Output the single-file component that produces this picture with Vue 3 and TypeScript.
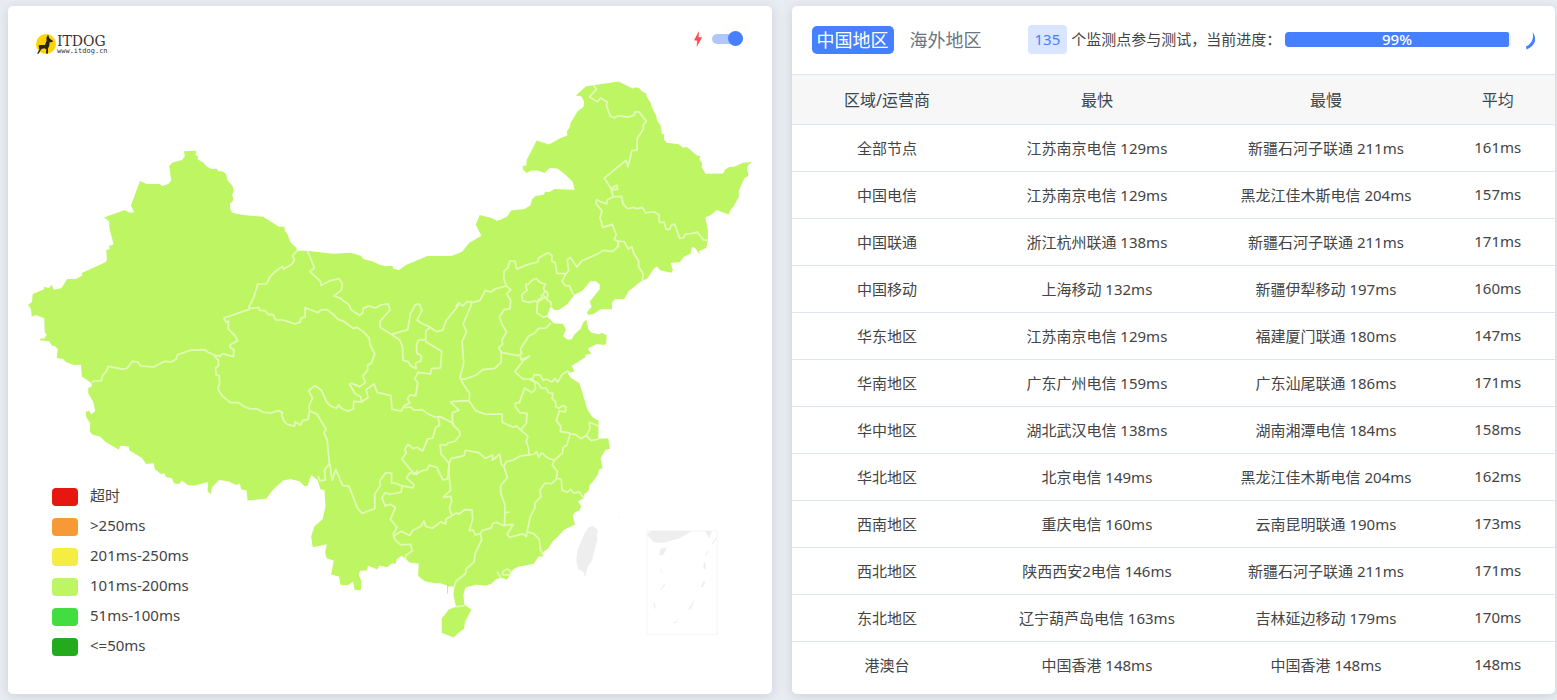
<script setup lang="ts">
import { ref } from 'vue'

interface Sheet {
  x: number
  y: number
  lines: string[]
}
interface Row {
  area: string
  fast: string
  slow: string
  avg: string
}

const realtime = ref(true)
const region = ref('china')
const progress = 99

const legend = [
  { label: '超时', tone: 'timeout' },
  { label: '>250ms', tone: 'slowest' },
  { label: '201ms-250ms', tone: 'slow' },
  { label: '101ms-200ms', tone: 'fair' },
  { label: '51ms-100ms', tone: 'good' },
  { label: '<=50ms', tone: 'best' },
]

const rows: Row[] = [
  { area: '全部节点', fast: '江苏南京电信 129ms', slow: '新疆石河子联通 211ms', avg: '161ms' },
  { area: '中国电信', fast: '江苏南京电信 129ms', slow: '黑龙江佳木斯电信 204ms', avg: '157ms' },
  { area: '中国联通', fast: '浙江杭州联通 138ms', slow: '新疆石河子联通 211ms', avg: '171ms' },
  { area: '中国移动', fast: '上海移动 132ms', slow: '新疆伊犁移动 197ms', avg: '160ms' },
  { area: '华东地区', fast: '江苏南京电信 129ms', slow: '福建厦门联通 180ms', avg: '147ms' },
  { area: '华南地区', fast: '广东广州电信 159ms', slow: '广东汕尾联通 186ms', avg: '171ms' },
  { area: '华中地区', fast: '湖北武汉电信 138ms', slow: '湖南湘潭电信 184ms', avg: '158ms' },
  { area: '华北地区', fast: '北京电信 149ms', slow: '黑龙江佳木斯电信 204ms', avg: '162ms' },
  { area: '西南地区', fast: '重庆电信 160ms', slow: '云南昆明联通 190ms', avg: '173ms' },
  { area: '西北地区', fast: '陕西西安2电信 146ms', slow: '新疆石河子联通 211ms', avg: '171ms' },
  { area: '东北地区', fast: '辽宁葫芦岛电信 163ms', slow: '吉林延边移动 179ms', avg: '170ms' },
  { area: '港澳台', fast: '中国香港 148ms', slow: '中国香港 148ms', avg: '148ms' },
]

// Map sheets hold points in thirds of a map unit, relative to the sheet's origin.
const coast: Sheet[] = [
  { x: 20, y: 140, lines: ['24,494 36,487 38,462 72,448 71,440 86,444 95,434 101,449 124,445 142,417 168,417 186,407 187,398 258,366 261,358 259,330 268,328 268,318 281,313 269,268 267,243 252,232 314,210 327,217 343,217 333,196 360,123 380,132 418,132 428,138 446,131 454,121 448,78 458,67 486,60 495,48 492,33 527,32 530,38 525,43 535,49 533,57 551,68 559,78 574,87 590,86 595,93 608,94 619,102 623,121 637,136 642,151 637,165 641,180 630,192 631,206 637,218 665,224 730,230 776,259 794,261 795,273 802,281 813,308 829,323 832,332'] },
  { x: 200, y: 230, lines: ['320,62 400,71 453,68 483,77 492,88 516,93 540,104 557,109 578,107 580,116 598,120 620,104 683,78'] },
  { x: 400, y: 230, lines: ['155,78 187,65 209,38 245,17 236,0 228,-16 240,-45 275,-36 292,-28'] },
  { x: 500, y: 70, lines: ['0,450 22,440 34,421 74,417 92,406 97,388 107,378 132,374 137,365 149,366 165,357 225,359 219,335 198,315 175,296 151,293 134,309 115,301 93,302 81,309 70,298 69,288 80,286 81,270 111,211 148,223 181,204 203,196 202,183 210,172 213,158 234,123 252,110 253,93 246,79 229,76 259,48 281,45 357,34 399,55 408,51 420,55 427,63 440,70 441,79 454,99 456,110 471,140 472,150 483,166 486,190 494,193 493,207 502,218 538,222 549,232 563,231 591,255 603,258 599,266 608,281 606,291 618,311 671,310 676,299 689,291 704,290 731,278 758,276 746,285 742,297 747,311 744,320 735,324 718,362 718,380 702,409 694,418 687,433 651,420 635,434 617,442 625,480 625,512 620,534 598,543 602,556 586,533 577,532 573,551 553,560 541,577 513,578 520,600 515,608 482,601 471,589 460,600 442,627 428,631'] },
  { x: 400, y: 230, lines: ['728,151 687,184 674,207 646,208 637,219 637,238 602,238 582,252 566,255 562,247 576,230 570,215 600,178 600,163 587,153 572,154 548,182 524,194 504,222 477,240 463,240 454,228 442,259 453,269 461,280 490,281 499,299 490,318 504,329 516,328 525,313 543,296 551,277 560,269 566,298 577,309 600,313 606,308 621,316 620,340 614,345 592,342 572,352 565,356 575,371 558,374 557,382 516,408 525,424 504,430 514,444 539,459 564,540 579,562 597,573 596,623'] },
  { x: 420, y: 370, lines: ['536,206 566,205 571,236 557,240 543,265 549,295 538,299 535,314 519,336 510,345 506,365 494,372 493,385 475,394 484,408 481,421 468,426 459,436 466,464 449,472 435,478 415,500 400,513 386,535 370,547 371,560 357,560 342,582 318,587 297,590 281,598 262,629 243,624 229,628 216,641 200,647 168,645 137,653 131,674 134,705 155,719 136,756 133,777 116,790 101,803 66,789 66,746 87,719 109,711 101,677 104,650 85,650 85,671 82,672 82,647 62,640 45,640 15,634 0,622'] },
  { x: 300, y: 400, lines: ['355,528 357,492 330,488 306,468 291,478 288,491 276,491 262,502 238,497 233,509 205,498 201,512 181,513 177,525 185,545 183,571 164,570 160,545 144,556 122,555 118,530 94,524 102,482 81,476 76,459 81,433 39,442 34,410 44,379 68,358 77,320 74,271 62,268 53,240 34,225 24,257 15,260 0,245'] },
  { x: 20, y: 370, lines: ['812,327 790,332 760,359 740,386 683,392 680,362 664,358 660,341 648,345 627,335 598,330 576,353 573,373 563,363 565,336 525,347 504,346 486,332 478,342 463,341 456,325 438,321 434,310 423,312 405,298 401,280 379,282 366,264 328,241 326,229 301,227 297,239 258,217 241,200 218,194 209,184 211,160 199,142 197,127 206,121 214,133 226,123 220,96 205,70 205,54 216,48 213,38 188,21'] },
  { x: 20, y: 140, lines: ['186,712 183,674 163,675 137,666 130,657 110,654 113,628 105,618 96,617 88,604 60,601 60,596 74,595 80,584 74,577 73,535 47,525 35,530 33,508'] },
]

const borders: Sheet[] = [
  { x: 20, y: 140, lines: [
    '832,332 818,347 824,359 816,373 792,387 788,379 765,395 749,412 741,431 714,432 700,476 688,498 688,508',
    '688,508 612,534 619,547 626,543 625,567 645,587 653,602 631,614 631,623 642,628 641,650 607,641 601,649 583,645 563,636 555,629 514,630 473,644 469,658 453,666 434,664 401,681 363,678 353,666 338,664 321,685 311,688 265,679 259,694 248,707 244,722 222,723 216,728',
    '583,648 596,661 596,677 587,684 589,705 598,707 599,730 594,746 607,768 623,781',
  ] },
  { x: 200, y: 230, lines: [
    '83,511 92,518 116,518 135,531 150,536 172,537 190,547 213,549 235,542 248,548 246,556 252,573 262,583 284,589 286,576 303,585 308,572 325,568 329,542',
    '148,236 176,232 179,241 196,242 206,254 219,253 228,270 250,270 286,282 301,276 303,265 316,260 316,233 355,248 363,240 380,238 397,250 415,268 430,273 460,295 471,292 490,304 509,325 510,342 525,372 515,400 503,406 504,419 489,438 497,458 480,470 455,460 449,463 467,492 483,500 485,516 462,514 461,537 444,543 425,535 416,524 410,535 392,528 380,515 365,481 345,467 327,482 338,505 328,527 329,542',
    '323,62 344,114 330,124 362,154 364,166 393,151 418,146 427,160 425,180 402,198 420,204 447,224 455,240 480,256 490,247 490,235 508,228 528,234 542,225 565,221 571,240 542,272 541,292 575,313 624,299 632,251 647,224 659,222 667,241 652,270 663,278 690,291 710,305 729,301 739,272 765,240 778,224',
    '575,313 600,330 608,350 610,391 625,395 634,408 649,416 647,399 663,393 665,378 651,369 650,345 656,330 678,329',
    '690,293 678,303 678,335 726,364 722,414 695,416 692,432 655,427 645,446 654,458 648,497 631,495 623,506 630,519 613,527 605,543 577,538 573,497 532,487 523,462 499,479 505,503 485,516',
    '613,533 633,531 642,540 667,539 680,549 706,562 720,560 742,570 764,582',
    '715,562 720,585 708,592 699,625 684,627 669,663 652,652 640,656 624,643 615,659 620,668 606,688',
    '329,542 352,553 379,598 372,608 382,630 390,712',
  ] },
  { x: 400, y: 230, lines: [
    '215,212 215,224 190,283 201,304 187,335 192,400 180,446',
    '168,231 177,218 190,228 203,214 215,218 241,211 257,181 273,186 288,176 320,168',
    '320,168 312,145 313,123 325,113 330,93 346,93 351,117 386,103 415,96 417,83 446,68 457,77 456,93 467,99 472,130 499,131 487,154 498,167 509,167 521,194',
    '499,131 507,122 503,90 512,82 532,111 547,92 597,70 610,61 638,64 657,49 656,33',
    '656,33 674,35 686,57 697,50 702,69 717,93 717,110 731,132 728,151',
    '320,168 333,179 321,192 333,210 331,236 313,239 299,261 308,285 321,305 307,330 309,343 297,353 305,367',
    '305,367 304,398 285,415 250,419 228,436 194,448 182,446',
    '305,367 356,377 366,370 362,358 387,318 405,310 417,295 440,294 453,279',
    '362,377 364,390 390,378 372,391 345,425 370,447 399,447',
    '399,447 403,434 421,435 431,451 441,448 457,456 466,445 474,457 487,434 503,424 516,430',
    '408,145 394,153 388,161 378,163 382,181 366,194 369,212 385,217 407,213 414,215 417,207 437,204 430,193 436,183 431,176 438,162 424,159 408,145',
    '437,181 445,192 441,208 455,218 455,229',
    '425,192 427,208 414,215 411,248 431,262 443,258',
    '390,449 415,459 425,474 440,475 447,489 460,490 457,505 467,514 469,531 478,535 489,527 498,530 497,546 479,543 470,572 484,590 482,605 511,609',
    '399,447 407,462 407,479 396,488 375,474 359,518 347,519 347,530 360,548 382,550 380,580 363,600',
    '511,612 529,614 544,626 560,617 575,632 597,627',
    '560,617 571,597 569,577 597,588',
    '182,446 192,465 210,490 208,513 228,542 257,553 307,552 308,577 340,592 350,588 363,600',
    '208,513 192,512 165,514 152,516 178,541 158,548 158,583',
  ] },
  { x: 420, y: 370, lines: [
    '98,163 119,183 121,195 106,214 84,219 81,225 61,225 64,252 88,280',
    '88,280 94,266 133,257 137,241 177,248 197,265 219,255 218,271 240,253 245,283 252,289',
    '303,180 325,199 320,215 328,241 327,255 300,259 280,271 261,274 252,289',
    '327,255 343,253 351,245 357,262 366,249 384,264 404,271 429,249 430,233 442,225 451,192',
    '404,271 398,285 413,305 410,328 396,341 376,340 361,360 364,380 345,400 346,413 332,440 322,486',
    '413,325 425,329 427,360 444,367 453,358 463,370 479,366 493,385',
    '252,289 263,323 243,347 243,368 255,403 256,428 268,427 256,428 254,465',
    '182,492 187,482 215,474 218,462 230,457 251,467 281,463 262,493 270,502 310,492 320,500 322,486',
    '322,486 342,491 359,509 362,540 371,557',
    '182,492 186,510 166,552 163,577 139,597 138,611 108,635 104,650',
    '88,280 88,320 93,360 71,382 93,379 96,394 89,412 96,438',
    '96,438 110,429 117,433 135,419 157,420 159,447 149,482 161,481 166,495 182,492',
    '232,605 243,622',
    '248,615 250,605 262,597 274,605 270,615 248,615',
    '109,711 134,707',
  ] },
  { x: 300, y: 400, lines: [
    '307,178 331,208 345,222 352,213 349,224 365,213 383,209 388,196 412,202 418,218 430,240 443,238 448,190',
    '456,348 439,357 438,372 423,366 398,385 378,380 373,363 364,379 338,392 330,407 304,394 280,410',
    '280,403 292,382 272,358 287,323 272,313 256,318 247,295 255,279 270,283 304,277 307,258 288,250 275,249 276,220 258,218 240,243 241,258 225,283 225,326 187,340 174,326 147,258 129,257 108,209 97,241 90,190',
    '307,258 340,264 343,255 320,234 330,219 345,222',
    '280,403 287,421 303,435 332,433 338,453 318,466 318,480',
    '90,190 74,210 77,240 60,243 55,228',
  ] },
  { x: 500, y: 70, lines: [
    '281,45 291,57 270,80 293,95 303,83 323,96 320,105 332,138 345,143 357,137 385,141 404,135 406,125 418,125 440,153 431,165 431,177 413,205 412,240 397,241 385,290 379,271 314,324 335,356 352,345 354,357 335,360 341,380',
    '341,380 366,379 370,401 384,416 402,412 412,416 428,412 438,428 463,425 478,434 479,456 494,457 500,478 511,478 514,466 525,462 540,504 553,503 557,492 577,490 593,486 612,510 625,510',
    '341,380 323,390 321,402 290,389 290,402 307,422 301,444 310,472 338,463 350,494 344,508 356,514 353,530',
  ] },
]

const mainland = coast
  .map((s) =>
    s.lines[0]
      .split(' ')
      .map((pair) => {
        const [px, py] = pair.split(',').map(Number)
        return `${(px / 3 + s.x).toFixed(1)},${(py / 3 + s.y).toFixed(1)}`
      })
      .join(' '),
  )
  .join(' ')

const sheetTransform = (s: Sheet) => `translate(${s.x} ${s.y}) scale(${1 / 3})`
</script>

<template>
  <main class="page">
    <section class="card map-card">
      <svg class="map" viewBox="8 6 764 688" role="img" aria-label="中国地区延迟地图">
        <polygon class="land" :points="mainland" />
        <g v-for="(s, i) in borders" :key="i" class="borders" :transform="sheetTransform(s)">
          <polyline v-for="(l, j) in s.lines" :key="j" :points="l" />
        </g>
        <g class="no-data" transform="translate(420 370) scale(0.33333)">
          <polygon points="520,468 536,481 530,498 534,505 518,570 505,590 496,622 490,605 476,598 470,571 474,540 495,490 507,472" />
          <polygon points="594,443 598,439 600,444" />
        </g>
        <g class="no-data" transform="translate(560 500) scale(0.33333)">
          <rect class="inset" x="262" y="93" width="211" height="311" />
          <polygon points="262,104 274,93 398,93 360,115 313,129 284,128" />
          <polygon points="437,94 457,94 449,116" />
          <polygon points="303,147 321,143 313,163 299,167" />
          <polygon points="432,188 438,188 438,208 432,208" />
          <polygon points="433,243 437,247 430,262 423,262" />
          <polygon points="403,302 406,302 393,328 386,328" />
          <polygon points="281,309 285,309 289,327 286,327" />
          <polygon points="469,112 471,116 460,133 456,133" />
          <polygon points="444,152 447,153 439,167 436,166" />
          <polygon points="302,201 309,218 306,220" />
          <polygon points="315,252 317,255 304,271 302,269" />
          <polygon points="340,368 359,361 346,371" />
        </g>
      </svg>

      <div class="overlay">
        <header class="map-head">
          <div class="logo">
            <svg class="logo-mark" viewBox="0 0 22 22" aria-hidden="true">
              <circle cx="11" cy="11" r="10" fill="#fcd209" />
              <path d="M13 1.5 L14.5 5.5 18 8 17.4 9 14.6 9.2 14.2 13 13 15.5 13 20.6 11 20.6 11.3 16.5 9.5 15.2 6.4 16 3.4 21 2.2 20.6 4.3 16.6 3.6 12.6 5 12 10 12 11.6 7.4 11.4 5Z" fill="#2b2218" />
            </svg>
            <div class="logo-text">
              <span class="logo-name">ITDOG</span>
              <span class="logo-url">www.itdog.cn</span>
            </div>
          </div>
          <label class="realtime">
            <svg class="bolt" viewBox="0 0 10 16" aria-hidden="true">
              <path d="M6 0 1 9.2 4.2 9.8 3.6 16 9.2 6.2 5.6 6.2Z" fill="#ff4d52" />
            </svg>
            <input v-model="realtime" class="switch" type="checkbox" aria-label="实时测试" />
          </label>
        </header>
        <ul class="legend">
          <li v-for="item in legend" :key="item.tone">
            <span class="swatch" :class="item.tone"></span>
            <span class="legend-label">{{ item.label }}</span>
          </li>
        </ul>
      </div>
    </section>

    <section class="card result-card">
      <header class="result-head">
        <nav class="tabs">
          <button type="button" :class="{ active: region === 'china' }" @click="region = 'china'">中国地区</button>
          <button type="button" :class="{ active: region === 'overseas' }" @click="region = 'overseas'">海外地区</button>
        </nav>
        <div class="status">
          <span class="badge">135</span>
          <span class="status-text">个监测点参与测试，当前进度：</span>
          <div class="track" role="progressbar" :aria-valuenow="progress">
            <div class="fill" :style="{ width: progress + '%' }">{{ progress }}%</div>
          </div>
          <svg class="spinner" viewBox="0 0 20 20" aria-hidden="true">
            <path d="M17.5 1.8Q25 13 11.5 19.5L11 16.5Q20 12 17.5 1.8Z" fill="#467fff" />
          </svg>
        </div>
      </header>
      <table>
        <thead>
          <tr>
            <th class="w-area">区域/运营商</th>
            <th class="w-node">最快</th>
            <th class="w-node">最慢</th>
            <th class="w-avg">平均</th>
          </tr>
        </thead>
        <tbody>
          <tr v-for="row in rows" :key="row.area">
            <td>{{ row.area }}</td>
            <td>{{ row.fast }}</td>
            <td>{{ row.slow }}</td>
            <td>{{ row.avg }}</td>
          </tr>
        </tbody>
      </table>
    </section>
  </main>
</template>

<style>
body {
  margin: 0;
  background: #e9edf2;
}
</style>

<style scoped>
.page {
  box-sizing: border-box;
  min-height: 100vh;
  padding: 6px 2px 6px 8px;
  display: grid;
  grid-template-columns: minmax(0, 1fr) minmax(0, 1fr);
  gap: 20px;
  font-family: "Noto Sans", "Noto Sans CJK SC", sans-serif;
  font-size: 15px;
  color: #444;
}
.card {
  background: #fff;
  border-radius: 5px;
  box-shadow: 0 2px 12px rgba(90, 110, 140, 0.22);
  overflow: hidden;
}
.map-card {
  display: grid;
}
.map,
.overlay {
  grid-area: 1 / 1;
}
.map {
  width: 100%;
  height: 100%;
}
.land {
  fill: #bef663;
}
.borders {
  fill: none;
  stroke: #e4fabb;
  stroke-width: 5;
  stroke-linejoin: round;
}
.no-data {
  fill: #eee;
}
.inset {
  fill: none;
  stroke: #f7f7f7;
  stroke-width: 4;
}
.overlay {
  display: flex;
  flex-direction: column;
  justify-content: space-between;
  padding: 25px 29px 32px 27px;
}
.map-head {
  display: flex;
  justify-content: space-between;
  align-items: flex-start;
}
.logo {
  display: flex;
  align-items: center;
  padding-top: 2px;
}
.logo-mark {
  width: 22px;
  height: 22px;
}
.logo-text {
  display: flex;
  flex-direction: column;
  padding-top: 2px;
  color: #3d3332;
}
.logo-name {
  font: 14px/13px "DejaVu Serif", serif;
}
.logo-url {
  font: 7px/7px "DejaVu Sans Mono", monospace;
}
.realtime {
  display: flex;
  align-items: center;
  gap: 9px;
}
.bolt {
  width: 10px;
  height: 16px;
}
.switch {
  appearance: none;
  position: relative;
  width: 31px;
  height: 10px;
  margin: 0;
  border-radius: 5px;
  background: #aec7ff;
  cursor: pointer;
}
.switch::after {
  content: "";
  position: absolute;
  top: -3px;
  left: 0;
  width: 15px;
  height: 15px;
  border-radius: 50%;
  background: #467fff;
}
.switch:checked::after {
  left: auto;
  right: 0;
}
.legend {
  list-style: none;
  margin: 0;
  padding: 0 0 0 17px;
}
.legend li {
  display: flex;
  align-items: center;
  gap: 12px;
  height: 30px;
}
.swatch {
  width: 26px;
  height: 18px;
  border-radius: 4px;
}
.legend-label {
  padding-bottom: 4px;
  line-height: 24px;
}
.timeout { background: #e61610; }
.slowest { background: #f79a35; }
.slow { background: #f6ed44; }
.fair { background: #bef663; }
.good { background: #42dd3f; }
.best { background: #24aa1d; }

.result-head {
  display: flex;
  align-items: center;
  gap: 41px;
  box-sizing: border-box;
  height: 69px;
  padding: 0 20px;
  border-bottom: 1px solid #dfe5ec;
}
.tabs {
  display: flex;
  gap: 11px;
}
.tabs button {
  height: 28px;
  padding: 0 5px;
  border: 0;
  border-radius: 5px;
  background: none;
  color: #6c757d;
  font: 18px/26px "Noto Sans", "Noto Sans CJK SC", sans-serif;
  white-space: nowrap;
  cursor: pointer;
}
.tabs button.active {
  background: #467fff;
  color: #fff;
}
.status {
  flex: 1;
  display: flex;
  align-items: center;
  gap: 4px;
  padding-bottom: 1px;
  white-space: nowrap;
}
.status-text {
  padding-bottom: 2px;
}
.badge {
  padding: 0 7px;
  border-radius: 4px;
  background: #dae5ff;
  color: #467fff;
  line-height: 29px;
}
.track {
  flex: 1;
  height: 15px;
  border-radius: 4px;
  background: #f0f2f5;
}
.fill {
  height: 15px;
  border-radius: 4px 2px 2px 4px;
  background: #467fff;
  color: #fff;
  font-weight: 500;
  line-height: 15px;
  text-align: center;
}
.spinner {
  width: 20px;
  height: 20px;
}
table {
  width: 100%;
  border-collapse: collapse;
  table-layout: fixed;
}
.w-area { width: 25%; }
.w-node { width: 30%; }
.w-avg { width: 15%; }
th {
  height: 47px;
  padding: 0 0 2px;
  background: #f7f7f7;
  color: #37474f;
  font-size: 16px;
  font-weight: 400;
  border-bottom: 1px solid #dfe5ec;
}
td {
  height: 44px;
  padding: 0 0 2px;
  text-align: center;
  border-bottom: 1px solid #dfe5ec;
}
tbody tr:last-child td {
  border-bottom: 0;
}
</style>
